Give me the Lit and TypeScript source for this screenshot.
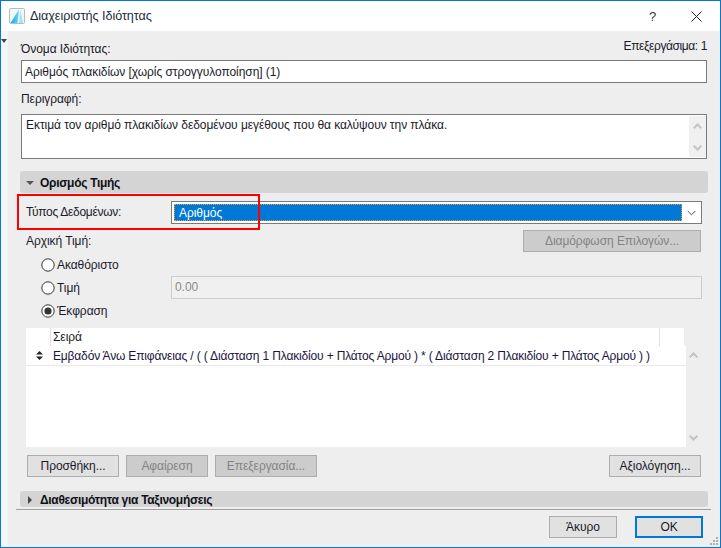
import { LitElement, html, svg, css } from "lit";
import { customElement } from "lit/decorators.js";

const chevUp = html`<svg width="9" height="6" viewBox="0 0 9 6"><path d="M.7 5.3 L4.5 1.5 L8.3 5.3" fill="none" stroke="#c4c4c4" stroke-width="2"/></svg>`;
const chevDown = html`<svg width="9" height="6" viewBox="0 0 9 6"><path d="M.7 .7 L4.5 4.5 L8.3 .7" fill="none" stroke="#c4c4c4" stroke-width="2"/></svg>`;

@customElement("app-root")
export class AppRoot extends LitElement {
  static styles = css`
    :host { display: block; width: 721px; height: 548px; font-family: "Liberation Sans", "Noto Sans", sans-serif; font-size: 12px; letter-spacing: -0.06px; color: #1a1a2a; }
    * { box-sizing: border-box; }
    .win { position: relative; width: 721px; height: 548px; border: 1px solid #0078d7; display: flex; flex-direction: column; background: #eee; overflow: hidden; }
    .title { height: 30px; flex: none; background: #fff; display: flex; align-items: center; padding: 0 0 0 8px; }
    .title .name { margin-left: 5px; font-size: 12.6px; color: #1c2b3a; }
    .title .help { margin-left: auto; width: 12px; font-size: 13px; font-weight: 500; color: #333; }
    .title .close { margin: 0 18px 0 30px; display: flex; }
    .main { flex: 1; display: flex; min-height: 0; }
    .strip { width: 7px; flex: none; background: #f5f5f5; position: relative; }
    .strip i { position: absolute; left: 0; top: 8px; border: 3.5px solid transparent; border-top: 4px solid #444; border-bottom: 0; }
    .content { flex: 1; display: flex; flex-direction: column; min-width: 0; }
    .labelrow { display: flex; justify-content: space-between; height: 29px; padding: 10px 13px 0 13px; line-height: 16px; }
    .labelrow .count { margin-top: -3px; letter-spacing: -0.4px; }
    .field { height: 23px; background: #fff; border: 1px solid #7a7a7a; margin: 0 13px 0 13px; padding: 0 3px; line-height: 22px; white-space: nowrap; }
    .lab2 { height: 31px; padding: 8px 0 0 13px; line-height: 16px; }
    .desc { height: 45px; background: #fff; border: 1px solid #7a7a7a; margin: 0 13px 0 13px; padding: 0 0 0 4px; line-height: 20px; display: flex; justify-content: space-between; }
    .vbar { width: 17px; background: #f0f0f0; display: flex; flex-direction: column; justify-content: space-between; align-items: center; padding: 7px 0 6px; margin: 1px 0; }
    .sec { background: #d4d4d4; border-radius: 3px; margin: 0 12px 0 12px; height: 22px; flex: none; display: flex; align-items: center; font-weight: 700; letter-spacing: -0.3px; color: #101018; padding: 1px 0 0 6px; gap: 6px; }
    .tri-d { border: 4px solid transparent; border-top: 4px solid #555; border-bottom: 0; }
    .tri-r { border: 4px solid transparent; border-left: 4px solid #444; border-right: 0; margin-left: 2px; margin-right: 2px; }
    .s1 { margin-top: 12px; }
    .dtype { display: flex; height: 23px; margin-top: 8px; padding: 0 18px 0 18px; align-items: stretch; }
    .dtype label { width: 145px; line-height: 22px; letter-spacing: -0.3px; }
    .sel { flex: 1; border: 1px solid #7a7a7a; background: #fff; padding: 2px; display: flex; align-items: stretch; }
    .sel .val { flex: 1; background: #0078d7; color: #fff; outline: 1px dotted #e8a030; outline-offset: -1px; padding-left: 5px; line-height: 19px; }
    .sel .arrow { width: 17px; display: flex; align-items: center; justify-content: center; padding-left: 2px; }
    .init { display: flex; justify-content: space-between; height: 22px; margin-top: 6px; padding: 0 19px 0 18px; line-height: 23px; }
    .btn { height: 22px; background: #e1e1e1; border: 1px solid #adadad; display: flex; align-items: center; justify-content: center; color: #1a1a2a; flex: none; width: 92px; }
    .btn.off { background: #ccc; color: #838383; }
    .btn.config { width: 178px; }
    .btn.remove { width: 82px; }
    .btn.edit { width: 102px; }
    .btn.action { width: 68px; }
    .radios { display: grid; grid-template-columns: 130px 1fr; grid-auto-rows: 23px; padding: 1px 18px 0 33px; align-items: center; }
    .radio { display: flex; align-items: center; gap: 2px; line-height: 16px; }
    .radio svg { flex: none; }
    .dis { height: 23px; background: #f0f0f0; border: 1px solid #ccc; color: #8a8a8a; padding: 0 3px; line-height: 21px; }
    .table { display: flex; height: 119px; margin: 6px 19px 0 18px; flex: none; }
    .tbody { flex: 1; min-width: 0; display: flex; flex-direction: column; }
    .thead { height: 18px; display: flex; background: #fff; margin-right: 2px; flex: none; }
    .thead .c0 { width: 25px; border-right: 1px solid #e0e0e0; }
    .thead .c1 { flex: 1; padding-left: 2px; line-height: 18px; border-right: 1px solid #e0e0e0; }
    .thead .c2 { width: 24px; }
    .trow { height: 20px; flex: none; display: flex; align-items: center; background: #fff; border-bottom: 1px solid #e8e8e8; white-space: nowrap; }
    .trow .h { width: 26px; display: flex; justify-content: center; padding-left: 1px; }
    .trow .t { color: #1a1440; padding: 1px 0 0 1px; letter-spacing: -0.16px; }
    .fill { flex: 1; background: #fff; }
    .tbar { width: 15px; display: flex; flex-direction: column; justify-content: space-between; align-items: center; padding: 24px 0 6px; }
    .btns { display: flex; gap: 7px; height: 22px; margin-top: 8px; padding: 0 19px 0 19px; flex: none; }
    .btns .ev { margin-left: auto; }
    .s2 { height: 16px; margin-top: 14px; }
    .div { height: 1px; background: #a0a0a0; margin: 2px 9px 0 8px; flex: none; }
    .foot { display: flex; justify-content: flex-end; gap: 18px; padding: 6px 17px 0 0; position: relative; flex: 1; }
    .ok { border: 2px solid #0078d7; }
    .grip { position: absolute; right: 1px; bottom: 1px; }
    .red { position: absolute; left: 16px; top: 193px; width: 243px; height: 36px; border: 2px solid #f00; pointer-events: none; }
  `;

  radio(on: boolean) {
    return html`<svg width="14" height="14" viewBox="0 0 14 14"><circle cx="7" cy="7" r="6.2" fill="#fff" stroke="#333" stroke-width="1"/>${on ? svg`<circle cx="7" cy="7" r="3.6" fill="#333"/>` : ""}</svg>`;
  }

  render() {
    return html`<div class="win">
      <div class="title">
        <svg width="16" height="16" viewBox="0 0 16 16">
          <defs><linearGradient id="g" x1="0" y1="0" x2="1" y2="0"><stop offset="0" stop-color="#12aeea"/><stop offset="1" stop-color="#6fd3f5"/></linearGradient></defs>
          <rect x=".5" y=".5" width="15" height="15" rx="1" fill="#f1f8fb" stroke="#b4bcc0"/>
          <path d="M10 1.5 L1.5 15 H8.5 Z" fill="url(#g)"/>
          <path d="M11.2 1.5 L14.2 15 H10 Z" fill="#a4e4f8"/>
        </svg>
        <span class="name">Διαχειριστής Ιδιότητας</span>
        <span class="help">?</span>
        <span class="close"><svg width="11" height="11" viewBox="0 0 11 11"><path d="M.5 .5 L10.5 10.5 M10.5 .5 L.5 10.5" stroke="#222" stroke-width="1" fill="none"/></svg></span>
      </div>
      <div class="main">
        <div class="strip"><i></i></div>
        <div class="content">
          <div class="labelrow"><span>Όνομα Ιδιότητας:</span><span class="count">Επεξεργάσιμα: 1</span></div>
          <div class="field">Αριθμός πλακιδίων [χωρίς στρογγυλοποίηση] (1)</div>
          <div class="lab2">Περιγραφή:</div>
          <div class="desc"><span>Εκτιμά τον αριθμό πλακιδίων δεδομένου μεγέθους που θα καλύψουν την πλάκα.</span>
            <div class="vbar">${chevUp}${chevDown}</div></div>
          <div class="sec s1"><span class="tri-d"></span>Ορισμός Τιμής</div>
          <div class="dtype"><label>Τύπος Δεδομένων:</label>
            <div class="sel"><div class="val">Αριθμός</div><div class="arrow"><svg width="9" height="6" viewBox="0 0 9 6"><path d="M.7 1 L4.5 4.8 L8.3 1" fill="none" stroke="#555" stroke-width="1"/></svg></div></div></div>
          <div class="init"><span>Αρχική Τιμή:</span><div class="btn off config">Διαμόρφωση Επιλογών...</div></div>
          <div class="radios">
            <div class="radio">${this.radio(false)}Ακαθόριστο</div><div></div>
            <div class="radio">${this.radio(false)}Τιμή</div><div class="dis">0.00</div>
            <div class="radio">${this.radio(true)}Έκφραση</div><div></div>
          </div>
          <div class="table">
            <div class="tbody">
              <div class="thead"><div class="c0"></div><div class="c1">Σειρά</div><div class="c2"></div></div>
              <div class="trow"><div class="h"><svg width="7" height="9" viewBox="0 0 7 9"><path d="M3.5 0 L7 3.5 H0 Z M0 5.5 H7 L3.5 9 Z" fill="#222"/></svg></div>
              <div class="t">Εμβαδόν Άνω Επιφάνειας / ( ( Διάσταση 1 Πλακιδίου + Πλάτος Αρμού ) * ( Διάσταση 2 Πλακιδίου + Πλάτος Αρμού ) )</div></div>
              <div class="fill"></div>
            </div>
            <div class="tbar">${chevUp}${chevDown}</div>
          </div>
          <div class="btns">
            <div class="btn">Προσθήκη...</div>
            <div class="btn off remove">Αφαίρεση</div>
            <div class="btn off edit">Επεξεργασία...</div>
            <div class="btn ev">Αξιολόγηση...</div>
          </div>
          <div class="sec s2"><span class="tri-r"></span>Διαθεσιμότητα για Ταξινομήσεις</div>
          <div class="div"></div>
          <div class="foot">
            <div class="btn action">Άκυρο</div>
            <div class="btn action ok">OK</div>
            <svg class="grip" width="9" height="9" viewBox="0 0 9 9" fill="#b0b0b0"><rect x="6" y="0" width="2" height="2"/><rect x="3" y="3" width="2" height="2"/><rect x="6" y="3" width="2" height="2"/><rect x="0" y="6" width="2" height="2"/><rect x="3" y="6" width="2" height="2"/><rect x="6" y="6" width="2" height="2"/></svg>
          </div>
        </div>
      </div>
      <div class="red"></div>
    </div>`;
  }
}
